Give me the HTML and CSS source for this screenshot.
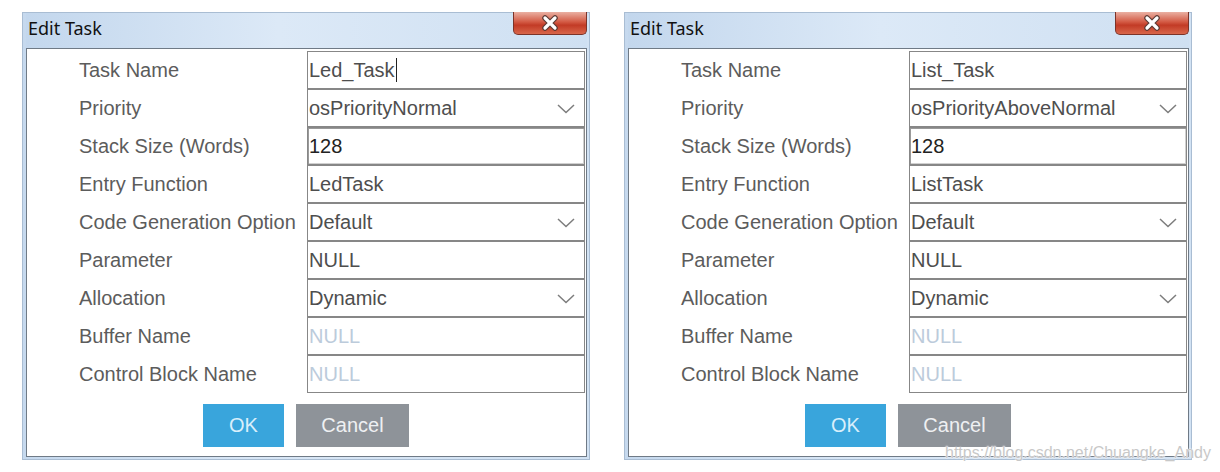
FILE: index.html
```html
<!DOCTYPE html>
<html lang="en">
<head>
    <meta charset="UTF-8">
    <title>Edit Task</title>
    <link rel="stylesheet" href="styles.css">
</head>
<body>
    <div class="screen">
        <div class="dialog">
            <div class="titlebar">
                <span class="title">Edit Task</span>
                <div class="close">
                    <svg width="24" height="16" viewBox="0 0 24 16"><path d="M7 3 L17 13 M17 3 L7 13" stroke="#5a3a34" stroke-width="5.5" stroke-linecap="round"/><path d="M7 3 L17 13 M17 3 L7 13" stroke="#fff" stroke-width="3.2" stroke-linecap="round"/></svg>
                </div>
            </div>
            <div class="panel">
                <div class="form">
                    <label>Task Name</label>
                    <div class="field"><span>Led_Task</span><span class="caret"></span></div>
                    <label>Priority</label>
                    <div class="field select"><span>osPriorityNormal</span><svg class="chevron" width="18" height="10" viewBox="0 0 18 10"><path d="M1 1 L9 8.5 L17 1" fill="none" stroke="#7d7d7d" stroke-width="1.5"/></svg></div>
                    <label>Stack Size (Words)</label>
                    <div class="field inset"><span>128</span></div>
                    <label>Entry Function</label>
                    <div class="field"><span>LedTask</span></div>
                    <label>Code Generation Option</label>
                    <div class="field select"><span>Default</span><svg class="chevron" width="18" height="10" viewBox="0 0 18 10"><path d="M1 1 L9 8.5 L17 1" fill="none" stroke="#7d7d7d" stroke-width="1.5"/></svg></div>
                    <label>Parameter</label>
                    <div class="field"><span>NULL</span></div>
                    <label>Allocation</label>
                    <div class="field select"><span>Dynamic</span><svg class="chevron" width="18" height="10" viewBox="0 0 18 10"><path d="M1 1 L9 8.5 L17 1" fill="none" stroke="#7d7d7d" stroke-width="1.5"/></svg></div>
                    <label>Buffer Name</label>
                    <div class="field"><span class="placeholder">NULL</span></div>
                    <label>Control Block Name</label>
                    <div class="field"><span class="placeholder">NULL</span></div>
                </div>
                <div class="buttons">
                    <div class="btn ok">OK</div>
                    <div class="btn cancel">Cancel</div>
                </div>
            </div>
        </div>

        <div class="dialog">
            <div class="titlebar">
                <span class="title">Edit Task</span>
                <div class="close">
                    <svg width="24" height="16" viewBox="0 0 24 16"><path d="M7 3 L17 13 M17 3 L7 13" stroke="#5a3a34" stroke-width="5.5" stroke-linecap="round"/><path d="M7 3 L17 13 M17 3 L7 13" stroke="#fff" stroke-width="3.2" stroke-linecap="round"/></svg>
                </div>
            </div>
            <div class="panel">
                <div class="form">
                    <label>Task Name</label>
                    <div class="field"><span>List_Task</span></div>
                    <label>Priority</label>
                    <div class="field select"><span>osPriorityAboveNormal</span><svg class="chevron" width="18" height="10" viewBox="0 0 18 10"><path d="M1 1 L9 8.5 L17 1" fill="none" stroke="#7d7d7d" stroke-width="1.5"/></svg></div>
                    <label>Stack Size (Words)</label>
                    <div class="field inset"><span>128</span></div>
                    <label>Entry Function</label>
                    <div class="field"><span>ListTask</span></div>
                    <label>Code Generation Option</label>
                    <div class="field select"><span>Default</span><svg class="chevron" width="18" height="10" viewBox="0 0 18 10"><path d="M1 1 L9 8.5 L17 1" fill="none" stroke="#7d7d7d" stroke-width="1.5"/></svg></div>
                    <label>Parameter</label>
                    <div class="field"><span>NULL</span></div>
                    <label>Allocation</label>
                    <div class="field select"><span>Dynamic</span><svg class="chevron" width="18" height="10" viewBox="0 0 18 10"><path d="M1 1 L9 8.5 L17 1" fill="none" stroke="#7d7d7d" stroke-width="1.5"/></svg></div>
                    <label>Buffer Name</label>
                    <div class="field"><span class="placeholder">NULL</span></div>
                    <label>Control Block Name</label>
                    <div class="field"><span class="placeholder">NULL</span></div>
                </div>
                <div class="buttons">
                    <div class="btn ok">OK</div>
                    <div class="btn cancel">Cancel</div>
                </div>
            </div>
        </div>

        <div class="watermark">https://blog.csdn.net/Chuangke_Andy</div>
    </div>
</body>
</html>
```

FILE: styles.css
```css
body {
    margin: 0;
    background-color: #fff;
    font-family: "Liberation Sans", Arial, sans-serif;
}
.screen {
    position: relative;
    display: flex;
    gap: 34px;
    padding: 12px 0 0 22px;
    height: 472px;
    box-sizing: border-box;
}
.dialog {
    width: 568px;
    height: 448px;
    display: flex;
    flex-direction: column;
    box-sizing: border-box;
    border: 1px solid #a9bdd3;
    background: linear-gradient(to right, #c6d9ee, #d9e7f6 40%, #d2e2f3);
    padding: 0 2px 2px 3px;
}
.titlebar {
    position: relative;
    height: 35px;
    display: flex;
    align-items: center;
    padding-left: 2px;
    background: linear-gradient(to right, #c3d7ed, #dce9f7 45%, #cfe0f2);
}
.title {
    font-family: "Noto Sans", "Open Sans", sans-serif;
    font-size: 18px;
    color: #111;
    margin-top: -6px;
}
.close {
    position: absolute;
    top: -1px;
    right: 0;
    width: 74px;
    height: 23px;
    box-sizing: border-box;
    border: 1px solid #7c3328;
    border-top: none;
    border-radius: 0 0 5px 5px;
    background: linear-gradient(to bottom, #eab0a2, #d35a44 45%, #c23b26 60%, #d8664a);
    display: flex;
    align-items: center;
    justify-content: center;
}
.panel {
    flex: 1;
    background-color: #fff;
    border: 1px solid #6f7a86;
    padding: 2px 1px 0 52px;
}
.form {
    display: grid;
    grid-template-columns: 228px 1fr;
    grid-auto-rows: 38px;
}
label {
    display: flex;
    align-items: center;
    font-size: 20px;
    color: #5c5c5c;
    white-space: nowrap;
}
.field {
    display: flex;
    align-items: center;
    border: 1px solid #878787;
    padding-left: 1px;
    font-size: 20px;
    color: #4e4e4e;
    position: relative;
}
.field.inset {
    box-shadow: inset 1px 1px 0 #9a9a9a, inset -1px -1px 0 #d0d0d0;
    color: #222;
}
.placeholder {
    color: #bccbdb;
}
.caret {
    width: 1px;
    height: 24px;
    background-color: #222;
    margin-left: 1px;
}
.chevron {
    position: absolute;
    right: 9px;
    top: 14px;
}
.buttons {
    display: flex;
    justify-content: center;
    gap: 12px;
    margin: 11px 0 0 -52px;
}
.btn {
    height: 43px;
    display: flex;
    align-items: center;
    justify-content: center;
    font-size: 20px;
}
.ok {
    width: 81px;
    background-color: #39a5dc;
    color: #d9effb;
}
.cancel {
    width: 113px;
    background-color: #8e9399;
    color: #eef0f2;
}
.watermark {
    position: absolute;
    left: 945px;
    top: 444px;
    font-size: 16px;
    color: #c8c8c8;
    white-space: nowrap;
    text-shadow: 0 0 2px #fff, 0 0 1px #fff;
}
```
